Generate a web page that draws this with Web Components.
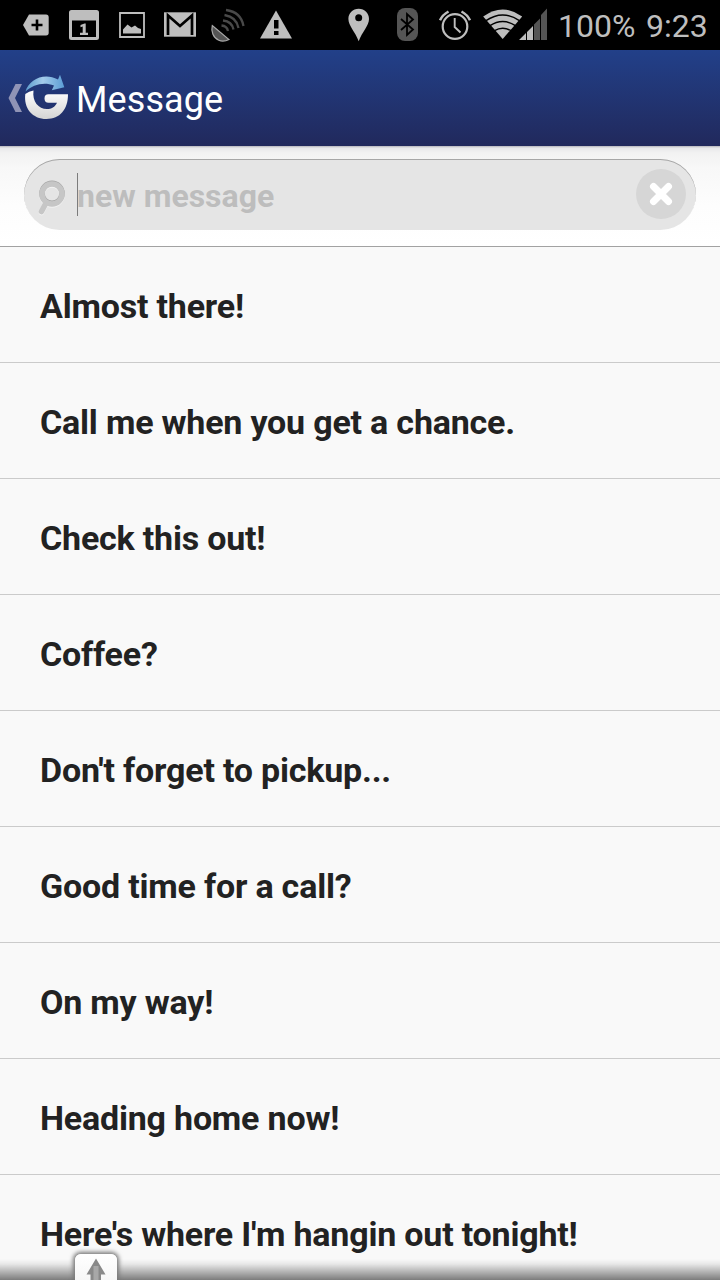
<!DOCTYPE html>
<html lang="en">
<head>
<meta charset="UTF-8">
<meta name="viewport" content="width=device-width, initial-scale=1">
<title>Message</title>
<style>
    html, body {
        margin: 0;
        height: 100%;
        overflow: hidden;
        background: #f9f9f9;
        font-family: Roboto, "Liberation Sans", sans-serif;
    }
</style>
</head>
<body>
<message-screen></message-screen>

<script>
class StatusBar extends HTMLElement {
    constructor() {
        super();
        this.attachShadow({ mode: 'open' });
    }

    connectedCallback() {
        this.shadowRoot.innerHTML = `
            <style>
                :host {
                    display: flex;
                    height: 50px;
                    background: #000000;
                    color: #bebebe;
                    font-size: 32px;
                    line-height: 52px;
                    white-space: nowrap;
                }
                .icons { display: flex; flex: none; fill: #bebebe; }
                .notifications { padding-left: 12px; width: 335px; box-sizing: border-box; }
                .system { width: 223px; }
                svg { display: block; height: 50px; flex: none; }
                .battery { width: 88px; flex: none; }
            </style>
            <div class="icons notifications">
                <svg width="48" viewBox="12 0 48 50"><path d="M29 14.5h17q2.7 0 2.7 2.700v15.600q0 2.700-2.700 2.700H29L23 25z"/><path d="M37 19.5v11M31.5 25h11" stroke="#000" stroke-width="2.6"/></svg>
                <svg width="48" viewBox="60 0 48 50"><path fill-rule="evenodd" d="M71.500 10h25q2.500 0 2.500 2.500v25q0 2.500-2.500 2.500h-25q-2.500 0-2.500-2.500v-25q0-2.500 2.500-2.500zM72 20.500v16.500h24v-16.500z"/><path d="M80.500 25l4-1.500h1.200v9.200H88V35h-8v-2.300h2.700v-6.100l-2.200.7z"/></svg>
                <svg width="48" viewBox="108 0 48 50"><path d="M120 13h24v24h-24z" fill="none" stroke="#bebebe" stroke-width="1.800"/><path d="M123 33.500v-4l4.500-5 4 3 3.500-2 3 2.500 3 1v4.500z"/></svg>
                <svg width="48" viewBox="156 0 48 50"><path d="M164 12.300h32v24.400h-32z"/><path d="M168 35V15.500l12 10.500 12-10.500V35" fill="none" stroke="#000" stroke-width="2.700"/></svg>
                <svg width="48" viewBox="204 0 48 50"><path d="M212.300 25.500c-1.500 6 1 12.500 6.500 14.800 3.500 1.400 7 .8 10.200-.8z" fill="#555" stroke="#aaa" stroke-width="1.200"/><g fill="none" stroke="#494949" stroke-width="2.300"><path d="M221.500 25.500q5.500.500 6.500 5.500"/><path d="M223 20.500q9 1 10.500 9"/><path d="M224.500 15q12 2 14 13"/><path d="M226 10q15 2 17.500 16"/></g></svg>
                <svg width="48" viewBox="252 0 48 50"><path d="M276 10.500L292 38.500H260z" /><path d="M274 20h4.500v8.500h-4.500zM274 31h4.500v4h-4.500z" fill="#000"/></svg>
            </div>
            <div class="icons system">
                <svg width="48" viewBox="335 0 48 50"><path fill-rule="evenodd" d="M358.700 8.700c6 0 10.300 4.400 10.300 10.200 0 6.500-7 13.100-10.300 22.300-3.300-9.200-10.300-15.800-10.300-22.300 0-5.800 4.300-10.200 10.300-10.200zm0 5.600a3.500 3.500 0 100 7 3.500 3.500 0 000-7z"/></svg>
                <svg width="48" viewBox="383 0 48 50"><rect x="397" y="8" width="21" height="33" rx="8" fill="#555"/><path d="M401 19l12 10.500-6 5.500V14l6 5.500L401 30" fill="none" stroke="#000" stroke-width="1.800"/></svg>
                <svg width="48" viewBox="431 0 48 50"><g fill="none" stroke="#bebebe"><circle cx="455" cy="26.500" r="12.300" stroke-width="2.200"/><path d="M454.700 18v9l5.800 5.500" stroke-width="1.900"/><path d="M440 20.300q2.500-5.500 8.500-8.800M470 20.300q-2.500-5.500-8.500-8.800" stroke-width="2.500"/></g></svg>
                <svg width="40" viewBox="479 0 40 50" overflow="visible"><path d="M502.700 39L483.200 16.500Q502.700 2.500 522.200 16.500z"/><g fill="none" stroke="#000" stroke-width="1.500"><path d="M486 20.700q16.700-11.500 33.400 0M490 25.700q12.700-8.200 25.400 0M494.500 30.700q8.200-4.800 16.400 0"/></g></svg>
                <svg width="30" viewBox="519 0 30 50"><path d="M519 40l7-7v7zM527 32l6-6v14h-6z"/><path d="M534 24.500l6-6V40h-6zM541 15l6-6.500V40h-6z" fill="#555"/></svg>
            </div>
            <div class="battery">100%</div>
            <div class="clock">9:23</div>
        `;
    }
}

class TitleBar extends HTMLElement {
    constructor() {
        super();
        this.attachShadow({ mode: 'open' });
    }

    connectedCallback() {
        this.shadowRoot.innerHTML = `
            <style>
                :host {
                    display: flex;
                    align-items: center;
                    height: 96px;
                    background: linear-gradient(180deg, #224089 0%, #21295c 100%);
                    color: #ffffff;
                }
                svg { display: block; flex: none; width: 76px; height: 96px; }
                .title { font-size: 36px; line-height: 96px; padding-top: 4px; letter-spacing: 0.1px; }
            </style>
            <svg viewBox="0 50 76 96">
                <defs>
                    <linearGradient id="silver" x1="0" y1="0" x2="0" y2="1"><stop offset="0" stop-color="#fff"/><stop offset="1" stop-color="#d4d4d4"/></linearGradient>
                    <linearGradient id="sky"><stop offset="0" stop-color="#5c9ccd"/><stop offset=".45" stop-color="#a3cbea"/><stop offset="1" stop-color="#5b9dd5"/></linearGradient>
                </defs>
                <path d="M22 84h-6.500L8.500 98l7 14H22l-7-14z" fill="#9094b6"/>
                <path d="M33.500 90.500Q29 91 25.300 94C23.500 108.500 32.500 119 46.500 119 60 119 68 109.500 68 94.300H48.500q-4 0-4 4.200t4 4.200H57C55 107 51.500 109 47 109c-8.500 0-15-7.500-13.500-18.500z" fill="url(#silver)"/>
                <path d="M25.500 91.500C29 79.500 44 72 58 79.500L60 74.800 64.300 87.300 51.800 90.200 54 85.500C43 81.500 33 85 25.500 91.500z" fill="url(#sky)"/>
            </svg>
            <div class="title"><slot></slot></div>
        `;
    }
}

class MessageInput extends HTMLElement {
    constructor() {
        super();
        this.attachShadow({ mode: 'open' });
    }

    connectedCallback() {
        this.shadowRoot.innerHTML = `
            <style>
                :host {
                    display: block;
                    box-sizing: border-box;
                    height: 101px;
                    padding: 13px 24px 0;
                    border-bottom: 1px solid #a2a2a2;
                    background: linear-gradient(180deg, #b5b5bb 0, #e8e8ea 2px, #f2f2f2 7px, #f8f8f8 22px, #fdfdfd 60px, #fff 100%);
                }
                .field {
                    display: flex;
                    align-items: center;
                    box-sizing: border-box;
                    height: 71px;
                    padding-right: 10px;
                    border-radius: 36px;
                    background: #e5e5e5;
                    box-shadow: inset 0 1px 0 #a6a6a6;
                }
                svg { display: block; flex: none; }
                .clear { margin-bottom: 1px; }
                .cursor { width: 1px; height: 43px; margin-left: 1px; background: #7c7c7c; }
                .placeholder {
                    flex: 1;
                    font-size: 32px;
                    font-weight: 700;
                    line-height: 40px;
                    padding-top: 3px;
                    margin-left: -1px;
                    color: #bdbdbd;
                    white-space: nowrap;
                }
            </style>
            <div class="field">
                <svg width="52" height="71" viewBox="24 159 52 71"><g fill="none" stroke-linecap="round"><g stroke="#f2f2f2" transform="translate(0 1)"><circle cx="52" cy="194" r="10" stroke-width="5.500"/><path d="M45.500 204l-4 7.500" stroke-width="5.500"/></g><g stroke="#a6a6a6" transform="translate(0 -.7)"><circle cx="52" cy="194" r="10" stroke-width="5.500"/></g><g stroke="#c6c6c6"><path d="M45.500 204l-4 7.500" stroke-width="5.500"/><circle cx="52" cy="194" r="10" stroke-width="5.500"/></g></g></svg>
                <div class="cursor"></div>
                <div class="placeholder"><slot></slot></div>
                <svg class="clear" width="50" height="50" viewBox="0 0 50 50"><circle cx="25" cy="25" r="25" fill="#d6d6d6"/><path d="M17.500 17.500l15 15M32.500 17.500l-15 15" stroke="#fff" stroke-width="7" stroke-linecap="round"/></svg>
            </div>
        `;
    }
}

class MessageRow extends HTMLElement {
    constructor() {
        super();
        this.attachShadow({ mode: 'open' });
    }

    connectedCallback() {
        this.shadowRoot.innerHTML = `
            <style>
                :host {
                    display: flex;
                    align-items: center;
                    box-sizing: border-box;
                    height: 116px;
                    padding: 3px 0 0 40px;
                    border-bottom: 1px solid #cbcbcb;
                    background: #f9f9f9;
                    color: #222222;
                    font-size: 34px;
                    font-weight: 700;
                    line-height: 40px;
                    letter-spacing: -0.2px;
                    white-space: nowrap;
                }
            </style>
            <slot></slot>
        `;
    }
}

class BottomHandle extends HTMLElement {
    constructor() {
        super();
        this.attachShadow({ mode: 'open' });
    }

    connectedCallback() {
        this.shadowRoot.innerHTML = `
            <style>
                :host {
                    display: block;
                    height: 36px;
                    overflow: hidden;
                    background: linear-gradient(180deg, transparent 15px, rgba(0, 0, 0, 0.07) 20px, rgba(0, 0, 0, 0.5) 36px);
                }
                .tab {
                    box-sizing: border-box;
                    width: 42px;
                    height: 44px;
                    margin: 0 0 0 75px;
                    border-radius: 6px;
                    background: linear-gradient(180deg, #fff, #f0f0f0);
                    box-shadow: 0 0 4px 2px #777;
                }
                :host { box-sizing: border-box; padding-top: 10px; }
                svg { display: block; }
            </style>
            <div class="tab">
                <svg width="42" height="44" viewBox="75 1254 42 44"><path d="M96 1258.500L105.500 1274.500H101V1290H90.500V1274.500H86.500z" fill="#898989"/><path d="M96 1266v20" stroke="#a8a8a8" stroke-width="5"/></svg>
            </div>
        `;
    }
}

class MessageScreen extends HTMLElement {
    constructor() {
        super();
        this.attachShadow({ mode: 'open' });
        this.messages = [
            'Almost there!',
            'Call me when you get a chance.',
            'Check this out!',
            'Coffee?',
            "Don't forget to pickup...",
            'Good time for a call?',
            'On my way!',
            'Heading home now!',
            "Here's where I'm hangin out tonight!"
        ];
    }

    connectedCallback() {
        this.shadowRoot.innerHTML = `
            <style>
                :host {
                    display: block;
                    position: relative;
                    width: 720px;
                    height: 1280px;
                    overflow: hidden;
                }
                bottom-handle {
                    position: absolute;
                    left: 0;
                    right: 0;
                    bottom: 0;
                }
            </style>
            <status-bar></status-bar>
            <title-bar>Message</title-bar>
            <message-input>new message</message-input>
            <div class="list">
                ${this.messages.map(text => `<message-row>${text}</message-row>`).join('')}
            </div>
            <bottom-handle></bottom-handle>
        `;
    }
}

customElements.define('status-bar', StatusBar);
customElements.define('title-bar', TitleBar);
customElements.define('message-input', MessageInput);
customElements.define('message-row', MessageRow);
customElements.define('bottom-handle', BottomHandle);
customElements.define('message-screen', MessageScreen);
</script>
</body>
</html>
